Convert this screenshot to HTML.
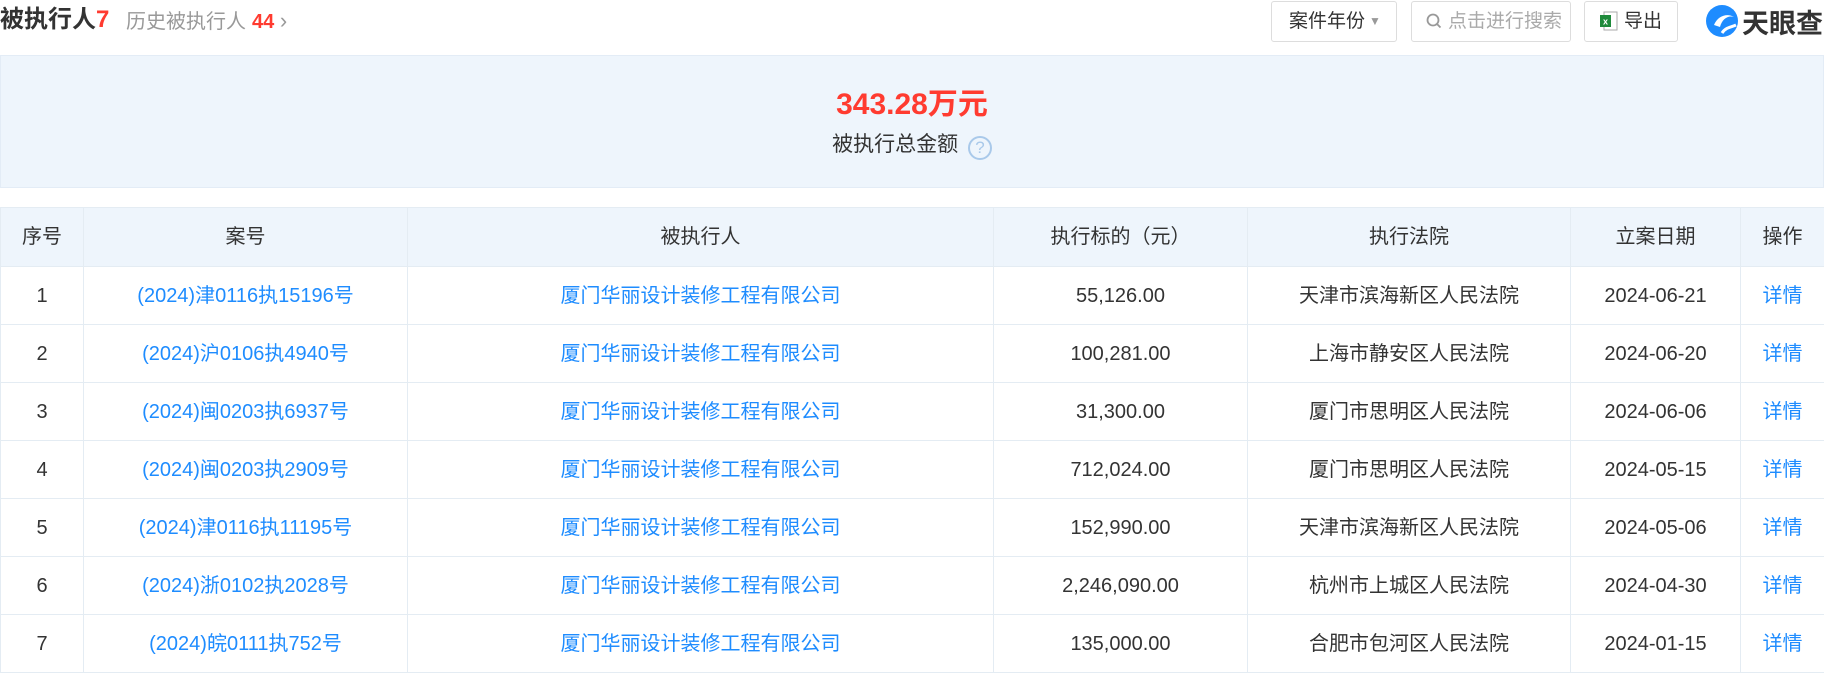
<!DOCTYPE html>
<html><head><meta charset="utf-8"><style>
*{margin:0;padding:0;box-sizing:border-box}
body{width:1824px;height:674px;background:#fff;font-family:"Liberation Sans","Noto Sans CJK SC",sans-serif;color:#333;position:relative;overflow:hidden}
.title{position:absolute;left:0;top:5px;font-size:24px;font-weight:bold;color:#333;line-height:30px}
.title .r{color:#ff3b30}
.hist{position:absolute;left:126px;top:6px;font-size:20px;color:#999;line-height:30px}
.hist b{color:#ff3b30;font-weight:bold;margin-left:6px}
.btn{position:absolute;top:1px;height:41px;border:1px solid #ddd;border-radius:3px;font-size:19px;line-height:39px;background:#fff}
.panel{position:absolute;left:0;top:55px;width:1824px;height:133px;background:#eef5fc;border:1px solid #e3ecf6}
.amt{position:absolute;left:0;right:0;top:29px;text-align:center;font-size:30px;font-weight:bold;color:#ff3b30;line-height:40px}
.lbl{position:absolute;left:0;right:0;top:74px;text-align:center;font-size:21px;color:#333;line-height:30px}
.q{display:inline-block;width:24px;height:24px;border:2px solid #a9c9ea;border-radius:50%;color:#a9c9ea;font-size:17px;line-height:20px;text-align:center;vertical-align:-2px;margin-left:4px}
table{position:absolute;left:0;top:207px;width:1824px;border-collapse:collapse;font-size:20px;table-layout:fixed}
td,th{border:1px solid #e4ecf3;text-align:center;height:58px;font-weight:normal;vertical-align:middle;padding:0}
td span,th span,td a{display:inline-block;line-height:28px;height:28px}
th{background:#eef5fc;height:59px;color:#333}
td a{color:#1e8cff;text-decoration:none}
</style></head><body>
<div class="title">被执行人<span class="r">7</span></div>
<div class="hist">历史被执行人<b>44</b> <span style="font-size:22px">›</span></div>
<div class="btn" style="left:1271px;width:126px;padding-left:17px">案件年份<span style="color:#999;font-size:12px;margin-left:4px;vertical-align:2px">▼</span></div>
<div class="btn" style="left:1411px;width:160px;color:#aaa;padding-left:14px"><svg width="16" height="16" viewBox="0 0 16 16" style="vertical-align:-2px;margin-right:6px"><circle cx="7" cy="7" r="5.5" fill="none" stroke="#999" stroke-width="1.8"/><path d="M11 11l3.5 3.5" stroke="#999" stroke-width="1.8"/></svg>点击进行搜索</div>
<div class="btn" style="left:1584px;width:94px;padding-left:15px"><svg width="18" height="20" viewBox="0 0 18 20" style="vertical-align:-4px;margin-right:6px"><rect x="4" y="1" width="13" height="18" fill="#fff" stroke="#aaa"/><rect x="0" y="4" width="11" height="12" fill="#1f8a3b"/><text x="5.5" y="13.5" font-size="9" fill="#fff" text-anchor="middle" font-family="Liberation Sans" font-weight="bold">x</text></svg>导出</div>
<div style="position:absolute;left:1704px;top:3px;height:36px;display:flex;align-items:center">
<svg width="36" height="36" viewBox="0 0 36 36"><circle cx="18" cy="18" r="16" fill="#1e8cff"/><path d="M10 22 C14 12 24 10 30 14 C24 12 18 16 16 24 Z" fill="#fff"/><path d="M18 30 C22 24 28 24 32 22" stroke="#fff" stroke-width="3" fill="none"/></svg>
<span style="font-size:27px;font-weight:bold;color:#333;margin-left:2px">天眼查</span></div>
<div class="panel"><div class="amt">343.28万元</div><div class="lbl">被执行总金额 <span class="q">?</span></div></div>
<table>
<colgroup><col style="width:83px"><col style="width:324px"><col style="width:586px"><col style="width:254px"><col style="width:323px"><col style="width:170px"><col style="width:84px"></colgroup>
<tr><th><span>序号</span></th><th><span>案号</span></th><th><span>被执行人</span></th><th><span>执行标的（元）</span></th><th><span>执行法院</span></th><th><span>立案日期</span></th><th><span>操作</span></th></tr>
<tr><td><span>1</span></td><td><a>(2024)津0116执15196号</a></td><td><a>厦门华丽设计装修工程有限公司</a></td><td><span>55,126.00</span></td><td><span>天津市滨海新区人民法院</span></td><td><span>2024-06-21</span></td><td><a>详情</a></td></tr>
<tr><td><span>2</span></td><td><a>(2024)沪0106执4940号</a></td><td><a>厦门华丽设计装修工程有限公司</a></td><td><span>100,281.00</span></td><td><span>上海市静安区人民法院</span></td><td><span>2024-06-20</span></td><td><a>详情</a></td></tr>
<tr><td><span>3</span></td><td><a>(2024)闽0203执6937号</a></td><td><a>厦门华丽设计装修工程有限公司</a></td><td><span>31,300.00</span></td><td><span>厦门市思明区人民法院</span></td><td><span>2024-06-06</span></td><td><a>详情</a></td></tr>
<tr><td><span>4</span></td><td><a>(2024)闽0203执2909号</a></td><td><a>厦门华丽设计装修工程有限公司</a></td><td><span>712,024.00</span></td><td><span>厦门市思明区人民法院</span></td><td><span>2024-05-15</span></td><td><a>详情</a></td></tr>
<tr><td><span>5</span></td><td><a>(2024)津0116执11195号</a></td><td><a>厦门华丽设计装修工程有限公司</a></td><td><span>152,990.00</span></td><td><span>天津市滨海新区人民法院</span></td><td><span>2024-05-06</span></td><td><a>详情</a></td></tr>
<tr><td><span>6</span></td><td><a>(2024)浙0102执2028号</a></td><td><a>厦门华丽设计装修工程有限公司</a></td><td><span>2,246,090.00</span></td><td><span>杭州市上城区人民法院</span></td><td><span>2024-04-30</span></td><td><a>详情</a></td></tr>
<tr><td><span>7</span></td><td><a>(2024)皖0111执752号</a></td><td><a>厦门华丽设计装修工程有限公司</a></td><td><span>135,000.00</span></td><td><span>合肥市包河区人民法院</span></td><td><span>2024-01-15</span></td><td><a>详情</a></td></tr>
</table>
</body></html>
